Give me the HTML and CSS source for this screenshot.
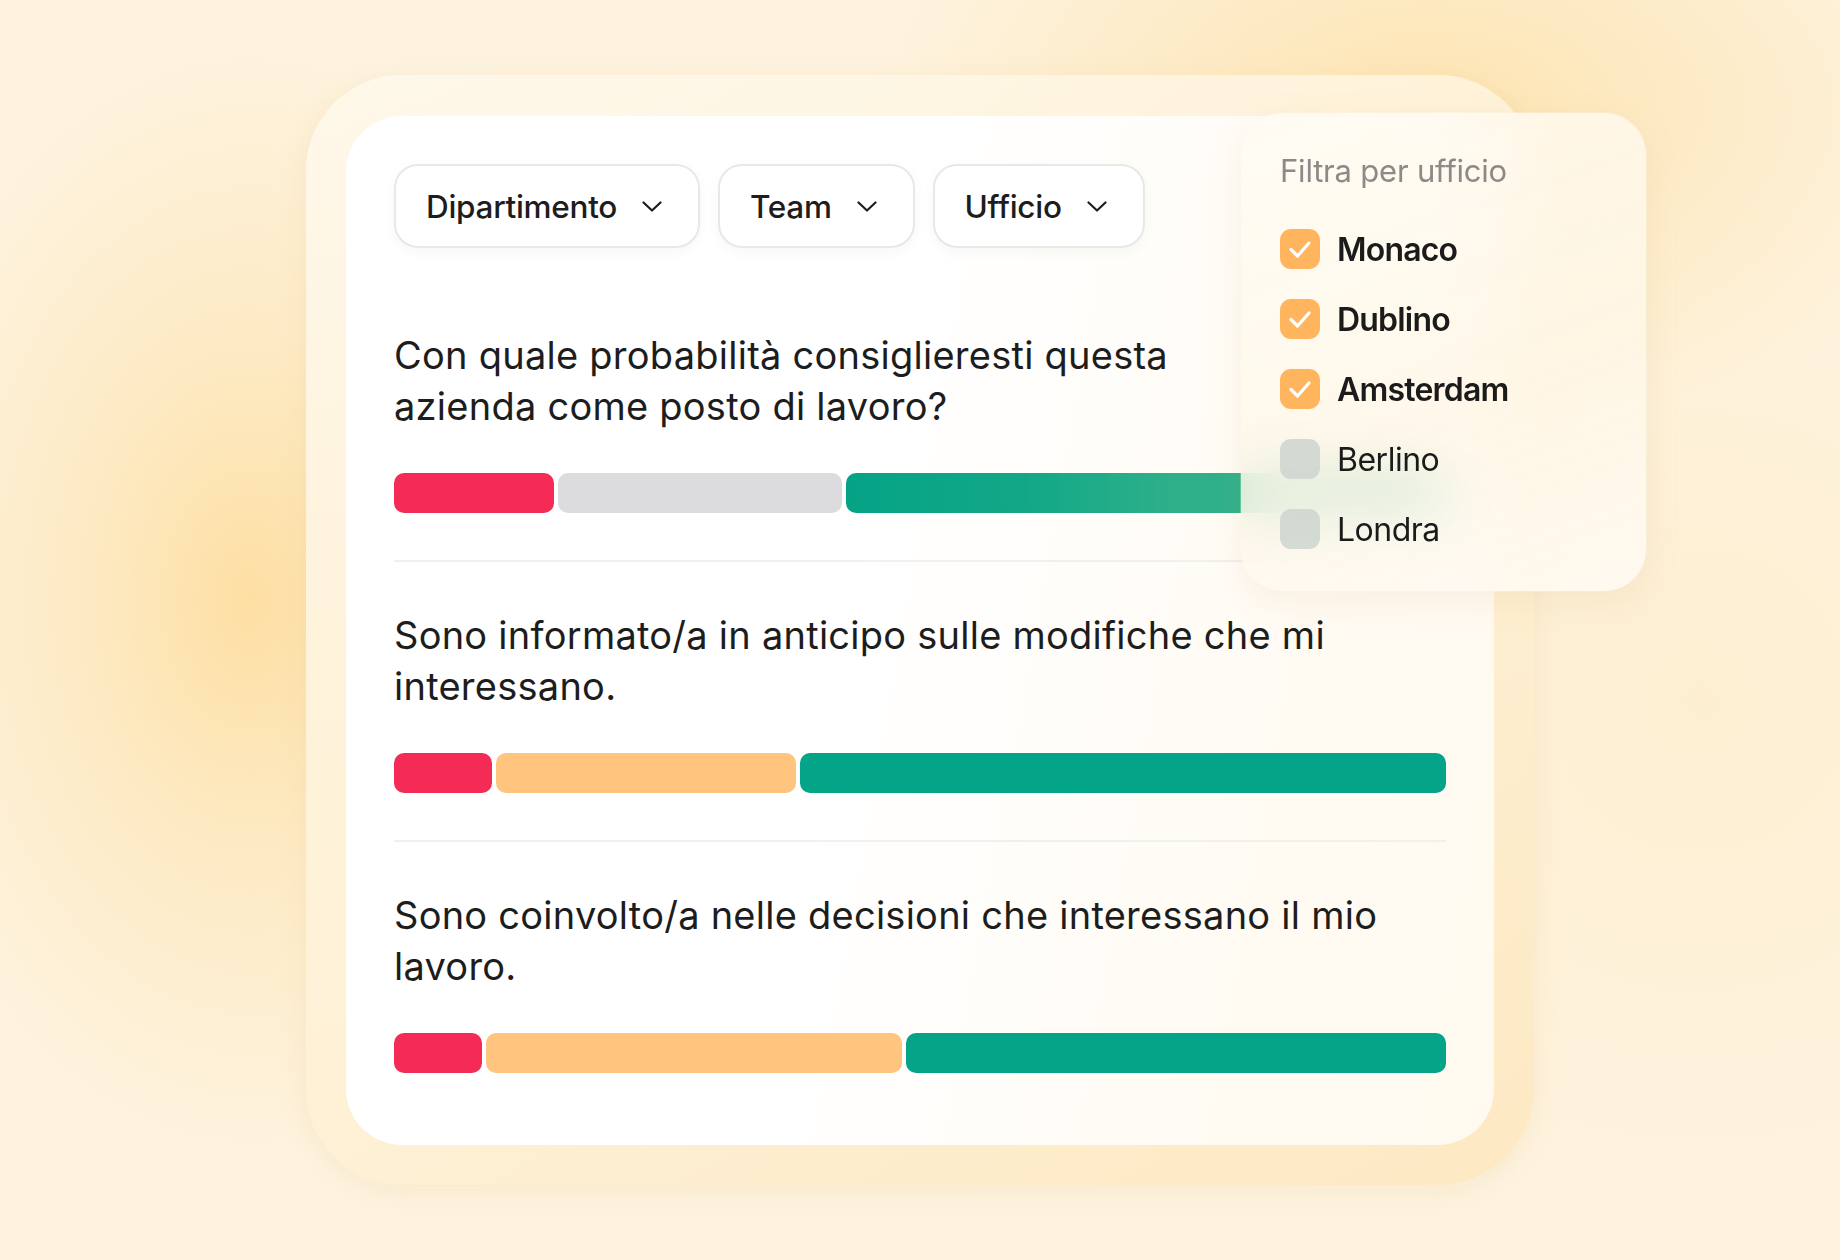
FILE: index.html
```html
<!DOCTYPE html>
<html lang="it">
<head>
<meta charset="utf-8">
<title>Filtri sondaggio</title>
<link rel="stylesheet" href="styles.css">
</head>
<body>
<main class="stage">
  <div class="frame">
    <section class="card">
      <div class="filters">
        <button class="dropdown">Dipartimento<svg class="chev" viewBox="0 0 20 11" width="20" height="11"><polyline points="1.5,1.5 10,9.5 18.5,1.5"/></svg></button>
        <button class="dropdown">Team<svg class="chev" viewBox="0 0 20 11" width="20" height="11"><polyline points="1.5,1.5 10,9.5 18.5,1.5"/></svg></button>
        <button class="dropdown">Ufficio<svg class="chev" viewBox="0 0 20 11" width="20" height="11"><polyline points="1.5,1.5 10,9.5 18.5,1.5"/></svg></button>
      </div>

      <div class="question">
        <p class="q-text">Con quale probabilità consiglieresti questa<br>azienda come posto di lavoro?</p>
        <div class="bar">
          <span class="seg red" style="width:160px"></span>
          <span class="seg grey" style="width:284px"></span>
          <span class="seg green fade"></span>
        </div>
      </div>

      <div class="question">
        <p class="q-text">Sono informato/a in anticipo sulle modifiche che mi<br>interessano.</p>
        <div class="bar">
          <span class="seg red" style="width:98px"></span>
          <span class="seg orange" style="width:300px"></span>
          <span class="seg green"></span>
        </div>
      </div>

      <div class="question">
        <p class="q-text">Sono coinvolto/a nelle decisioni che interessano il mio<br>lavoro.</p>
        <div class="bar">
          <span class="seg red" style="width:88px"></span>
          <span class="seg orange" style="width:416px"></span>
          <span class="seg green"></span>
        </div>
      </div>
    </section>

    <aside class="popup">
      <p class="popup-title">Filtra per ufficio</p>
      <ul class="options">
        <li class="option checked"><span class="box"><svg viewBox="0 0 40 40" width="40" height="40"><polyline points="11,20.5 17.5,27 29,14"/></svg></span>Monaco</li>
        <li class="option checked"><span class="box"><svg viewBox="0 0 40 40" width="40" height="40"><polyline points="11,20.5 17.5,27 29,14"/></svg></span>Dublino</li>
        <li class="option checked"><span class="box"><svg viewBox="0 0 40 40" width="40" height="40"><polyline points="11,20.5 17.5,27 29,14"/></svg></span>Amsterdam</li>
        <li class="option"><span class="box"></span>Berlino</li>
        <li class="option"><span class="box"></span>Londra</li>
      </ul>
    </aside>
  </div>
</main>
</body>
</html>
```

FILE: styles.css
```css
* { box-sizing: border-box; }

html, body {
  margin: 0;
  padding: 0;
}

body {
  width: 1840px;
  height: 1260px;
  overflow: hidden;
  font-family: "Inter", "Noto Sans", sans-serif;
  color: #1d1d1d;
  background:
    radial-gradient(ellipse 380px 560px at 250px 600px, rgba(253, 222, 160, 0.95) 0%, rgba(253, 226, 170, 0.5) 45%, rgba(253, 232, 190, 0) 100%),
    radial-gradient(ellipse 560px 320px at 1430px 110px, rgba(253, 226, 170, 0.85) 0%, rgba(253, 230, 180, 0) 100%),
    radial-gradient(ellipse 500px 500px at 1700px 700px, rgba(253, 236, 200, 0.6) 0%, rgba(253, 236, 200, 0) 100%),
    #fdf3df;
}

.stage {
  padding: 75px 0 0 306px;
}

.frame {
  position: relative;
  width: 1228px;
  padding: 41px 40px 40px 40px;
  border-radius: 96px;
  background: linear-gradient(150deg, rgba(255, 249, 236, 0.92) 0%, rgba(254, 241, 214, 0.9) 55%, rgba(253, 232, 193, 0.95) 100%);
  box-shadow: 0 6px 28px rgba(220, 175, 100, 0.14);
}

.card {
  width: 1148px;
  padding: 48px 48px 72px 48px;
  border-radius: 56px;
  background: linear-gradient(100deg, #ffffff 45%, #fffbf3 80%, #fffaf0 100%);
}

.filters {
  display: flex;
  gap: 18px;
  margin-bottom: 34px;
}

.dropdown {
  display: flex;
  align-items: center;
  gap: 25px;
  height: 84px;
  padding: 0 36px 0 30px;
  border: 2px solid #e8e8e7;
  border-radius: 24px;
  background: #ffffff;
  box-shadow: 0 4px 14px rgba(0, 0, 0, 0.035);
  font-family: inherit;
  font-size: 31.5px;
  font-weight: 500;
  color: #1d1d1d;
  letter-spacing: -0.3px;
}

.chev {
  flex: none;
  fill: none;
  stroke: #1d1d1d;
  stroke-width: 2.2;
  stroke-linecap: round;
  stroke-linejoin: round;
}

.question {
  padding: 48px 0 47px;
  border-bottom: 2px solid #f0f0ef;
}

.question:last-child {
  padding-bottom: 0;
  border-bottom: none;
}

.q-text {
  margin: 0 0 41px;
  font-size: 38px;
  line-height: 51px;
  font-weight: 400;
  letter-spacing: 0.25px;
  color: #1d1d1d;
}

.bar {
  display: flex;
  gap: 4px;
  height: 40px;
}

.seg {
  display: block;
  height: 40px;
  border-radius: 10px;
  flex: none;
}

.seg.green { flex: 1; background: #03a488; }
.seg.green.fade { background: linear-gradient(90deg, #05a386 0%, #12a887 30%, #2fb08a 55%, #2fb08a 100%); }
.seg.red { background: #f42c55; }
.seg.grey { background: #dcdcde; }
.seg.orange { background: #ffc47d; }

.popup {
  position: absolute;
  left: 935px;
  top: 38px;
  width: 405px;
  height: 478px;
  padding: 39px 39px 42px;
  border-radius: 42px;
  background: linear-gradient(160deg, rgba(255, 251, 243, 0.82) 0%, rgba(255, 247, 232, 0.8) 60%, rgba(255, 251, 244, 0.85) 100%);
  backdrop-filter: blur(28px);
  -webkit-backdrop-filter: blur(28px);
  box-shadow: 0 10px 34px rgba(200, 160, 90, 0.13), 0 0 0 1px rgba(255, 255, 255, 0.25);
}

.popup-title {
  margin: 0 0 39px;
  font-size: 31px;
  line-height: 38px;
  font-weight: 400;
  color: #8b8a87;
  letter-spacing: -0.2px;
}

.options {
  list-style: none;
  margin: 0;
  padding: 0;
  display: flex;
  flex-direction: column;
  gap: 30px;
}

.option {
  display: flex;
  align-items: center;
  gap: 17px;
  height: 40px;
  font-size: 32px;
  font-weight: 400;
  color: #1b1b1b;
  letter-spacing: -0.5px;
}

.option.checked { font-weight: 600; letter-spacing: -0.8px; }

.box {
  flex: none;
  width: 40px;
  height: 40px;
  border-radius: 11px;
  background: rgba(205, 213, 207, 0.85);
}

.option.checked .box { background: #ffb55d; }

.box svg {
  display: block;
  fill: none;
  stroke: #ffffff;
  stroke-width: 3.2;
  stroke-linecap: round;
  stroke-linejoin: round;
}
```
